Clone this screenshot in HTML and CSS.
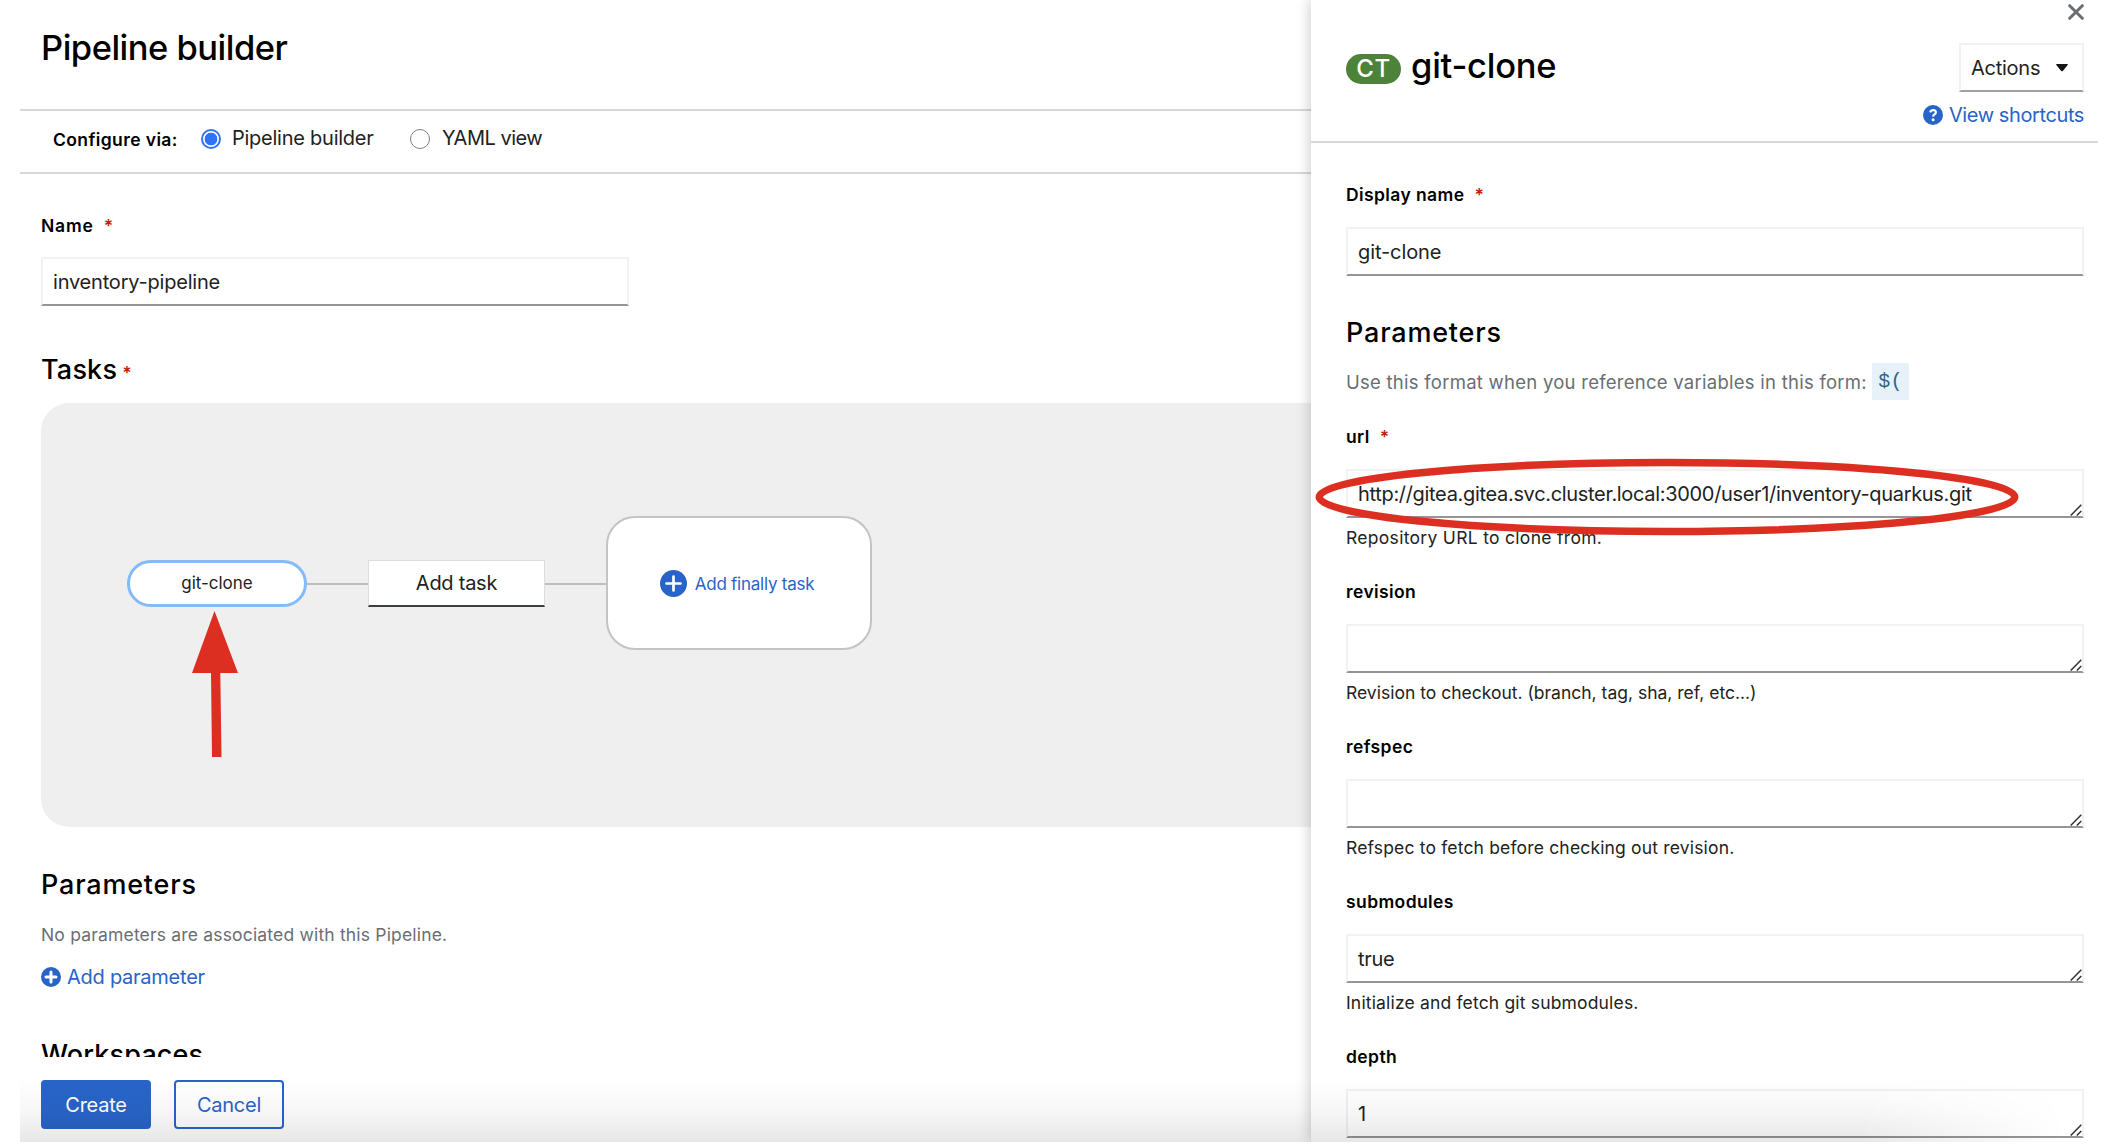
FILE: index.html
```html
<!DOCTYPE html>
<html lang="en">
<head>
<meta charset="utf-8">
<title>Pipeline builder</title>
<link rel="stylesheet" href="styles.css">
</head>
<body>
<div class="app">
  <main class="builder">
    <header class="page-header"><h1>Pipeline builder</h1></header>
    <div class="view-switch">
      <span class="switch-label">Configure via:</span>
      <span class="radio checked"></span>
      <span class="radio-text first">Pipeline builder</span>
      <span class="radio"></span>
      <span class="radio-text yaml">YAML view</span>
    </div>
    <div class="form">
      <div class="label name-label">Name<span class="req">*</span></div>
      <div class="input name-input">inventory-pipeline</div>
      <h2 class="tasks-title">Tasks<span class="req">*</span></h2>
      <div class="canvas">
        <div class="node task-node">git-clone</div>
        <div class="edge"></div>
        <div class="node add-node">Add task</div>
        <div class="edge"></div>
        <div class="node finally-node">
          <svg width="27" height="27" viewBox="0 0 20 20"><circle cx="10" cy="10" r="10" fill="#2864c8"/><path d="M10 4.800v10.400M4.800 10h10.400" stroke="#fff" stroke-width="2" stroke-linecap="round"/></svg>
          <span>Add finally task</span>
        </div>
        <svg class="arrow" width="48" height="146" viewBox="0 0 48 146"><path d="M22.500 0L46 62H28.300l1.200 84h-9.500l-1-84H0z" fill="#dc2f21"/></svg>
      </div>
      <h2 class="params-title">Parameters</h2>
      <p class="empty">No parameters are associated with this Pipeline.</p>
      <div class="add-link">
        <svg width="20" height="20" viewBox="0 0 20 20"><circle cx="10" cy="10" r="10" fill="#2864c8"/><path d="M10 5v10M5 10h10" stroke="#fff" stroke-width="3" stroke-linecap="round"/></svg>
        <span>Add parameter</span>
      </div>
      <h2 class="ws-title">Workspaces</h2>
    </div>
    <footer class="actions">
      <div class="btn primary">Create</div>
      <div class="btn secondary">Cancel</div>
    </footer>
    <div class="fade"></div>
  </main>

  <aside class="panel">
    <header class="panel-header">
      <div class="close-row">
        <svg width="16" height="16" viewBox="0 0 16 16"><path d="M1.700 1.700l12.600 12.600M14.300 1.700L1.700 14.300" stroke="#6a6e73" stroke-width="3" stroke-linecap="round"/></svg>
      </div>
      <div class="title-row">
        <span class="badge">CT</span>
        <h1>git-clone</h1>
        <div class="menu"><span>Actions</span><svg width="12" height="8" viewBox="0 0 12 8"><path d="M.8 0h10.400q1.200.3.300 1.300L6.800 7q-.8.700-1.600 0L.5 1.300Q-.4.300.8 0z" fill="#151515"/></svg></div>
      </div>
      <div class="shortcuts">
        <svg width="20" height="20" viewBox="0 0 20 20"><circle cx="10" cy="10" r="10" fill="#2864c8"/><path d="M7.100 7.400Q8 5 10.200 5q2.600.1 2.700 2.300 0 1.300-1.400 2.100-1.300.7-1.400 2.200" fill="none" stroke="#fff" stroke-width="2.200"/><circle cx="10.100" cy="14.700" r="1.500" fill="#fff"/></svg>
        <span>View shortcuts</span>
      </div>
    </header>
    <div class="panel-body">
      <div class="label display-label">Display name<span class="req">*</span></div>
      <div class="input display-input">git-clone</div>
      <h2>Parameters</h2>
      <p class="hint"><span>Use this format when you reference variables in this form:</span><code>$(</code></p>

      <div class="field url">
        <div class="label">url<span class="req">*</span></div>
        <div class="input area">http://gitea.gitea.svc.cluster.local:3000/user1/inventory-quarkus.git<svg class="grip" width="12" height="12" viewBox="0 0 12 12"><path d="M.7 11.500L11.300.7M6.800 11.500l4.500-4.600" stroke="#333" stroke-width="1.500"/></svg></div>
        <p class="help repo">Repository URL to clone from.</p>
        <svg class="highlight" width="704" height="78" viewBox="0 0 704 78"><ellipse cx="352" cy="39" rx="347.700" ry="34.400" fill="none" stroke="#dc2f21" stroke-width="7.500"/></svg>
      </div>
      <div class="field">
        <div class="label">revision</div>
        <div class="input area"><svg class="grip" width="12" height="12" viewBox="0 0 12 12"><path d="M.7 11.500L11.300.7M6.800 11.500l4.500-4.600" stroke="#333" stroke-width="1.500"/></svg></div>
        <p class="help checkout">Revision to checkout. (branch, tag, sha, ref, etc...)</p>
      </div>
      <div class="field">
        <div class="label">refspec</div>
        <div class="input area"><svg class="grip" width="12" height="12" viewBox="0 0 12 12"><path d="M.7 11.500L11.300.7M6.800 11.500l4.500-4.600" stroke="#333" stroke-width="1.500"/></svg></div>
        <p class="help">Refspec to fetch before checking out revision.</p>
      </div>
      <div class="field">
        <div class="label">submodules</div>
        <div class="input area">true<svg class="grip" width="12" height="12" viewBox="0 0 12 12"><path d="M.7 11.500L11.300.7M6.800 11.500l4.500-4.600" stroke="#333" stroke-width="1.500"/></svg></div>
        <p class="help">Initialize and fetch git submodules.</p>
      </div>
      <div class="field">
        <div class="label">depth</div>
        <div class="input area">1<svg class="grip" width="12" height="12" viewBox="0 0 12 12"><path d="M.7 11.500L11.300.7M6.800 11.500l4.500-4.600" stroke="#333" stroke-width="1.500"/></svg></div>
      </div>
    </div>
    <div class="fade panel-fade"></div>
  </aside>
</div>
</body>
</html>
```
FILE: styles.css
```css
* { box-sizing: border-box; }
body {
  margin: 0;
  background: #fff;
  color: #222;
  font: 20px/28px Inter, "Liberation Sans", sans-serif;
  letter-spacing: -0.25px;
}
h1, h2, p { margin: 0; }
h1 { font-size: 34.5px; line-height: 48px; font-weight: 500; color: #000; letter-spacing: -0.5px; }
h2 { font-size: 27px; line-height: 36px; font-weight: 500; color: #000; letter-spacing: 0.8px; }
svg { display: block; flex: none; }
span { white-space: nowrap; }

.app { display: flex; height: 1142px; padding: 0 18px 0 20px; overflow: hidden; }
.builder { position: relative; display: flex; flex-direction: column; width: 1291px; }
.panel { position: relative; width: 787px; height: 1142px; background: #fff; box-shadow: 0 0 14px rgba(3, 3, 3, 0.24); clip-path: inset(0 0 0 -20px); }

.page-header { height: 111px; padding: 24px 21px 0; border-bottom: 2px solid #d8d8d8; }
.view-switch { display: flex; align-items: center; height: 63px; padding: 0 33px 4px; border-bottom: 2px solid #d8d8d8; }
.switch-label, .label { font-size: 17.5px; font-weight: 600; color: #000; letter-spacing: 0.4px; }
.switch-label { width: 148px; }
.radio { width: 20px; height: 20px; border: 1.5px solid #808080; border-radius: 50%; margin-bottom: 1px; background: #fff; }
.radio.checked { border: 2px solid #2f74f6; background: radial-gradient(circle, #2f74f6 6px, #fff 6.7px); }
.radio-text { margin: 0 0 3px 11px; }
.radio-text.first { width: 146px; margin-right: 32px; }
.radio-text.yaml { margin-left: 12px; letter-spacing: -0.5px; }

.form { flex: none; height: 883px; padding: 38px 0 0 21px; overflow: hidden; }
.req { margin-left: 10px; color: #c9190b; font-size: 17.5px; line-height: 0; font-weight: 600; }
.name-label { letter-spacing: 0.8px; }
.input {
  height: 49px;
  padding: 0 10px;
  border: 2px solid #f2f2f2;
  border-bottom: 2px solid #959595;
  line-height: 47px;
  background: #fff;
  white-space: nowrap;
}
.name-input { width: 588px; margin-top: 17px; letter-spacing: -0.2px; }
.tasks-title { margin-top: 46px; letter-spacing: 0.2px; }
.tasks-title .req { margin-left: 5px; }

.canvas {
  position: relative;
  display: flex;
  align-items: center;
  height: 424px;
  margin-top: 15px;
  padding: 0 0 64px 86px;
  border-radius: 28px 0 0 28px;
  background: #efefef;
}
.node { display: flex; align-items: center; justify-content: center; background: #fff; flex: none; }
.edge { width: 61px; height: 2px; margin-top: 2px; background: #bdbdbd; flex: none; }
.task-node { width: 180px; height: 47px; border: 3px solid #83bbf6; border-radius: 24px; font-size: 17px; letter-spacing: 0; }
.add-node { width: 177px; height: 47px; margin-top: 1px; border: 1px solid #ddd; border-bottom: 2px solid #3c3f42; }
.finally-node { width: 266px; height: 134px; padding-right: 4px; border: 2px solid #c4c4c4; border-radius: 29px; gap: 8px; font-size: 17px; color: #2864c8; }
.finally-node span { margin-top: 2px; }
.arrow { position: absolute; left: 151px; top: 208px; }

.params-title { margin-top: 40px; }
.empty { margin-top: 18px; font-size: 17.5px; letter-spacing: 0.18px; color: #6a6e73; }
.add-link { display: flex; align-items: center; gap: 6px; margin-top: 14px; color: #2864c8; }
.ws-title { margin-top: 46px; letter-spacing: 0.15px; }

.actions { display: flex; gap: 23px; padding: 23px 21px 0; height: 85px; background: #fff; }
.btn { width: 110px; height: 49px; border: 2px solid #2864c8; border-radius: 4px; line-height: 47px; text-align: center; }
.primary { background: #2864c8; color: #fff; }
.secondary { background: #fff; color: #2864c8; }
.fade { position: absolute; left: 0; right: 0; bottom: 0; height: 64px; background: linear-gradient(rgba(0, 0, 0, 0), rgba(0, 0, 0, 0.03) 50%, rgba(0, 0, 0, 0.095)); pointer-events: none; }
.panel-fade { mask-image: linear-gradient(to right, #000 70%, transparent 96%); }

.panel-header { height: 143px; padding: 0 14px 0 35px; border-bottom: 2px solid #d8d8d8; }
.close-row { display: flex; justify-content: flex-end; padding-top: 4px; height: 43px; }
.title-row { display: flex; align-items: center; height: 49px; }
.badge { width: 55px; height: 30px; margin-top: 3px; border-radius: 15px; background: #4d8239; color: #fff; font-size: 24px; line-height: 30px; font-weight: 500; letter-spacing: 0.5px; text-align: center; }
.title-row h1 { margin: 0 auto 3px 10px; letter-spacing: -0.25px; }
.menu { display: flex; align-items: center; justify-content: space-between; width: 125px; height: 49px; padding: 0 14px 0 10px; border: 2px solid #f2f2f2; border-bottom: 2px solid #a0a0a0; }
.shortcuts { display: flex; align-items: center; justify-content: flex-end; gap: 6px; margin-top: 9px; color: #2864c8; letter-spacing: -0.4px; }

.panel-body { padding: 38px 14px 0 35px; }
.display-label { margin-bottom: 18px; }
.display-input { letter-spacing: -0.1px; }
.panel-body h2 { margin-top: 39px; }
.hint { display: flex; align-items: center; height: 37px; margin: 12px 0 23px; color: #6a6e73; font-size: 18.5px; letter-spacing: 0.26px; }
.hint code { width: 37px; height: 37px; margin-left: 5px; background: #e7f1fa; color: #2b6680; font: 20px/37px "Liberation Mono", monospace; text-align: center; }
.field { position: relative; margin-bottom: 26px; }
.area { position: relative; margin-top: 18px; letter-spacing: -0.32px; }
.grip { position: absolute; right: 0; bottom: 0; }
.help { margin-top: 6px; font-size: 17.5px; letter-spacing: 0.17px; }
.help.repo { letter-spacing: 0.3px; }
.help.checkout { letter-spacing: 0; }
.highlight { position: absolute; left: -31px; top: 35px; }
```
